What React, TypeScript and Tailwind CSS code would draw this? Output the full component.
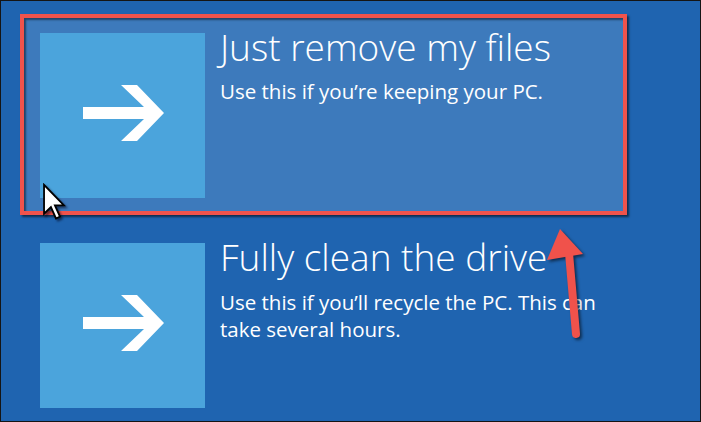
import React from "react";

function ArrowTile() {
  return (
    <div className="w-[165px] h-[165px] shrink-0 bg-[#4ba4dc] flex items-center justify-center">
      <svg width="165" height="165" viewBox="0 0 165 165">
        <polygon
          points="43,74 104,74 81,52 97,52 124,80 97,108 81,108 104,86 43,86"
          fill="#ffffff"
        />
      </svg>
    </div>
  );
}

function Cursor() {
  return (
    <svg
      className="absolute left-[41px] top-[182px]"
      width="24"
      height="38"
      viewBox="0 0 13 21"
      style={{ filter: "drop-shadow(2px 2px 1px rgba(0,0,20,0.55))" }}
    >
      <path
        d="M1 1 L1 17 L4.8 13.3 L7.6 19.6 L9.8 18.6 L7 12.4 L12 12.4 Z"
        fill="#ffffff"
        stroke="#000000"
        strokeWidth="1"
        strokeLinejoin="miter"
      />
    </svg>
  );
}

function RedArrow() {
  return (
    <svg
      className="absolute left-[535px] top-[220px]"
      width="60"
      height="125"
      viewBox="535 220 60 125"
      style={{ filter: "drop-shadow(2px 2px 1.5px rgba(0,0,0,0.55))" }}
    >
      <line x1="568" y1="252" x2="575" y2="333" stroke="#f0524b" strokeWidth="8" strokeLinecap="round" />
      <polygon points="559,228 546,259 582,253" fill="#f0524b" />
    </svg>
  );
}

export default function App() {
  return (
    <div
      className="relative w-[701px] h-[422px] overflow-hidden bg-[#1f64b0] border border-[#151515] text-white"
      style={{ fontFamily: '"Open Sans", "Noto Sans", sans-serif' }}
    >
      <div className="ml-[19px] mt-[13px] w-[607px] h-[201px] border-4 border-[#f0534c] bg-[#3d7abc] pl-[16px] pt-[15px] flex items-start gap-[15px] shadow-[2px_2px_2px_rgba(0,0,0,0.55),inset_2px_2px_2px_rgba(0,0,0,0.45)]">
        <ArrowTile />
        <div className="-mt-[6px]">
          <div className="text-[37px] leading-[40px] font-light">Just remove my files</div>
          <div className="mt-[11px] text-[20.5px] leading-[27px]">Use this if you’re keeping your PC.</div>
        </div>
      </div>

      <div className="ml-[39px] mt-[28px] flex items-start gap-[15px]">
        <ArrowTile />
        <div className="-mt-[6px] max-w-[400px]">
          <div className="text-[37px] leading-[40px] font-light">Fully clean the drive</div>
          <div className="mt-[12px] text-[20.5px] leading-[27px]">
            Use this if you’ll recycle the PC. This can take several hours.
          </div>
        </div>
      </div>

      <Cursor />
      <RedArrow />
    </div>
  );
}
